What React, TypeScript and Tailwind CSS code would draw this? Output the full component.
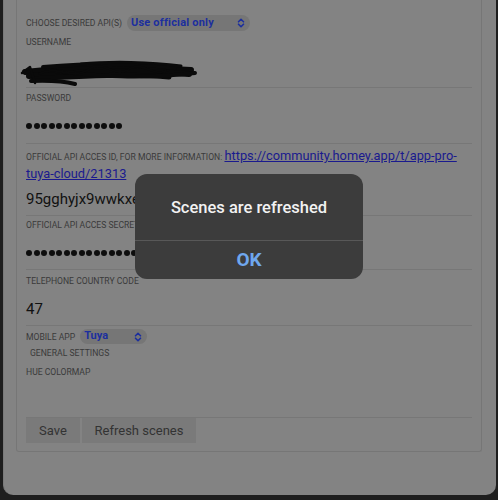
import React from "react";

function UpDown() {
  return (
    <svg width="8" height="10" viewBox="0 0 8 10" fill="none" stroke="#1c2f9e" strokeWidth="1.6" strokeLinecap="round" strokeLinejoin="round">
      <path d="M1.5 3.8 L4 1.3 L6.5 3.8" />
      <path d="M1.5 6.2 L4 8.7 L6.5 6.2" />
    </svg>
  );
}

function Dots({ count }: { count: number }) {
  return (
    <div className="flex gap-[1.5px]">
      {Array.from({ length: count }).map((_, i) => (
        <span key={i} className="block w-[6px] h-[6px] rounded-full bg-[#0d0d0d]" />
      ))}
    </div>
  );
}

function Scribble() {
  return (
    <svg width="180" height="28" viewBox="0 0 180 28" fill="none" stroke="#0a0a0a" strokeLinecap="round" strokeLinejoin="round">
      <path d="M6 14 C50 9 110 8 172 12" strokeWidth="6" />
      <path d="M10 18 C60 14 120 12 170 16" strokeWidth="6" />
      <path d="M14 21 C60 18 120 16 150 19" strokeWidth="5" />
      <path d="M24 9 C70 5 120 5 156 10" strokeWidth="4" />
      <path d="M12 23 C36 22 52 25 56 26" strokeWidth="4" />
      <path d="M3 15 L11 9 L16 25" strokeWidth="2.5" />
      <path d="M62 6 C92 3 132 4 162 8" strokeWidth="3" />
      <path d="M28 12 C80 19 124 21 176 15" strokeWidth="4" />
      <path d="M20 16 C40 6 52 24 72 10 C86 2 96 22 112 10 C124 4 136 20 150 12" strokeWidth="2" />
    </svg>
  );
}

const label = "text-[8.6px] leading-[12px] uppercase text-[#3a3a3a]";

export default function App() {
  return (
    <div
      className="relative w-[498px] h-[500px] bg-[#1e1e1e] overflow-hidden"
      style={{ fontFamily: "Roboto, 'Liberation Sans', sans-serif" }}
    >
      <div className="ml-[3px] w-[493px] h-[495px] bg-[#838383] rounded-b-[10px] border-l border-[#7a7a7a]">
        <div className="ml-[12px] w-[466px] h-[452px] border-x border-b border-[#767676] rounded-b-[3px] px-[9px]">
          {/* api choice */}
          <div className="h-[34px] pt-[15px] flex items-start gap-[5px]">
            <span className={label + " mt-[2px]"}>Choose desired API(s)</span>
            <div className="w-[123px] h-[16px] rounded-full bg-[#767676] flex items-center justify-between pl-[4px] pr-[5px]">
              <span className="text-[11px] font-bold text-[#1c2f9e] tracking-[0.2px]">Use official only</span>
              <UpDown />
            </div>
          </div>

          {/* username */}
          <div className="h-[54px] border-b border-[#777777] pt-[2px]">
            <div className={label}>Username</div>
            <div className="-ml-[7px] mt-[10px]">
              <Scribble />
            </div>
          </div>

          {/* password */}
          <div className="h-[56px] border-b border-[#777777] pt-[4px]">
            <div className={label}>Password</div>
            <div className="mt-[19px]">
              <Dots count={13} />
            </div>
          </div>

          {/* api id */}
          <div className="h-[72px] border-b border-[#777777] pt-[2px]">
            <div className="leading-[17px] whitespace-nowrap">
              <span className={label}>Official API acces ID, for more information: </span>
              <a className="text-[12.8px] text-[#1a1a8e] underline">
                https://community.homey.app/t/app-pro-
                <br />
                tuya-cloud/21313
              </a>
            </div>
            <div className="mt-[8px] text-[15px] leading-[18px] text-[#111]">95gghyjx9wwkxen8cyq4</div>
          </div>

          {/* api secret */}
          <div className="h-[54px] border-b border-[#777777] pt-[3px]">
            <div className={label}>Official API acces secret</div>
            <div className="mt-[19px]">
              <Dots count={15} />
            </div>
          </div>

          {/* telephone */}
          <div className="h-[56px] border-b border-[#777777] pt-[5px]">
            <div className={label}>Telephone country code</div>
            <div className="mt-[13px] text-[15px] leading-[18px] text-[#111]">47</div>
          </div>

          {/* mobile app */}
          <div className="pt-[3px] flex items-center gap-[5px]">
            <span className={label}>Mobile app</span>
            <div className="w-[67px] h-[15px] rounded-full bg-[#767676] flex items-center justify-between pl-[4px] pr-[5px]">
              <span className="text-[11px] font-bold text-[#1c2f9e]">Tuya</span>
              <UpDown />
            </div>
          </div>

          {/* general settings */}
          <div className="h-[71px] border-b border-[#777777]">
            <div className={label + " pl-[4px] mt-[3px]"}>General settings</div>
            <div className={label + " mt-[7px]"}>Hue colormap</div>
          </div>

          <div className="flex gap-[2px]">
            <button className="w-[54px] h-[25px] bg-[#7a7a7a] text-[13px] text-[#333]">Save</button>
            <button className="w-[114px] h-[25px] bg-[#7a7a7a] text-[13px] text-[#333]">Refresh scenes</button>
          </div>
        </div>
      </div>

      {/* dialog */}
      <div className="absolute left-[135px] top-[174px] w-[228px] h-[105px] rounded-[12px] bg-[#3c3c3c] flex flex-col">
        <div className="h-[67px] border-b border-[#585858] flex items-center justify-center">
          <span className="text-[16.5px] font-medium text-[#f2f2f2] mt-[2px]">Scenes are refreshed</span>
        </div>
        <div className="flex-1 flex items-center justify-center">
          <span className="text-[19px] font-bold text-[#6fa7ee]">OK</span>
        </div>
      </div>
    </div>
  );
}
